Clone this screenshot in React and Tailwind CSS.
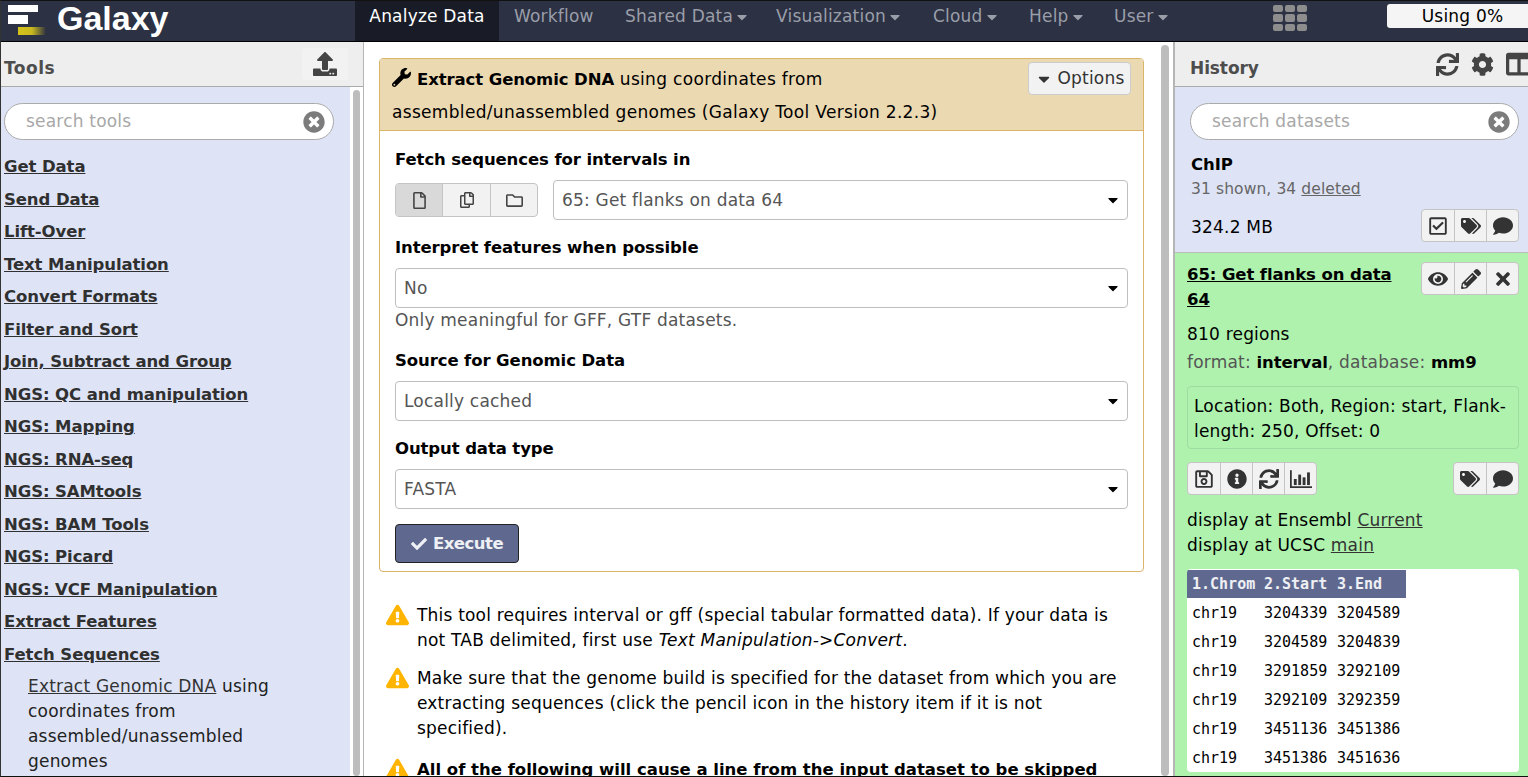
import React from "react";
import { FaUpload, FaTimesCircle, FaWrench, FaCaretDown, FaRegFile, FaRegCopy, FaRegFolder, FaCheck, FaExclamationTriangle, FaSync, FaCog, FaColumns, FaRegCheckSquare, FaTags, FaComment, FaEye, FaPencilAlt, FaTimes, FaRegSave, FaInfoCircle } from "react-icons/fa";

const font = "font-['DejaVu_Sans',sans-serif]";
const bold = "font-bold text-[16.5px] tracking-[-0.1px]";
const tools = ["Get Data","Send Data","Lift-Over","Text Manipulation","Convert Formats","Filter and Sort","Join, Subtract and Group","NGS: QC and manipulation","NGS: Mapping","NGS: RNA-seq","NGS: SAMtools","NGS: BAM Tools","NGS: Picard","NGS: VCF Manipulation","Extract Features","Fetch Sequences"];
const rows = [["3204339","3204589"],["3204589","3204839"],["3291859","3292109"],["3292109","3292359"],["3451136","3451386"],["3451386","3451636"]];

function BarChart({ className }) {
  return (
    <svg viewBox="0 0 20 18" width="22" height="20" className={className} fill="currentColor">
      <rect x="0" y="1" width="1.6" height="16" />
      <rect x="0" y="15.6" width="20" height="1.6" />
      <rect x="3.5" y="9" width="2.6" height="5.5" />
      <rect x="7.5" y="5" width="2.6" height="9.5" />
      <rect x="11.5" y="7.5" width="2.6" height="7" />
      <rect x="15.5" y="3" width="2.6" height="11.5" />
    </svg>
  );
}

function Nav({ label, caret, className }) {
  return (
    <div className={"flex items-center pb-[8px] text-[#9a9ea9] " + className}>
      {label}
      {caret && <FaCaretDown className="ml-[1px] text-[16px]" />}
    </div>
  );
}

function Search({ text }) {
  return (
    <div className="flex h-[37px] items-center justify-between rounded-full border border-[#aaa] bg-white pl-[21px] pr-[8px] text-[#a8a8a8]">
      <span className="pt-[1px]">{text}</span>
      <FaTimesCircle className="text-[22px] text-[#7c7c7c]" />
    </div>
  );
}

function Select({ value }) {
  return (
    <div className="flex h-[40px] items-center justify-between rounded-[4px] border border-[#bfbfbf] bg-white pl-[8px] pr-[6px] text-[#555]">
      <span className="pt-[1px]">{value}</span>
      <FaCaretDown className="text-[16px] text-black" />
    </div>
  );
}

function BtnGroup({ icons, className = "" }) {
  return (
    <div className={"flex h-[33px] overflow-hidden rounded-[4px] border border-[#c4c4c4] bg-[#f2f2f2] " + className}>
      {icons.map((I, i) => (
        <div key={i} className={"flex w-[32px] items-center justify-center text-[#333]" + (i ? " border-l border-[#c4c4c4]" : "")}>
          <I className="text-[20px]" />
        </div>
      ))}
    </div>
  );
}

function Warn({ children, className = "" }) {
  return (
    <div className={"flex " + className}>
      <FaExclamationTriangle className="mt-[1px] mr-[8px] h-[22px] w-[23px] shrink-0 text-[#ffb400]" />
      <div className="leading-[25px]">{children}</div>
    </div>
  );
}

export default function App() {
  return (
    <div className={"flex h-[777px] w-[1528px] flex-col overflow-hidden border-t border-b border-l border-t-[#111] border-b-[#111] border-l-[#333] bg-white text-[17px] text-black tracking-[0.2px] " + font}>
      <header className="flex h-[41px] shrink-0 items-stretch border-b border-black bg-[#2c3143]">
        <div className="flex w-[354px] items-start">
          <svg width="56" height="40" viewBox="0 0 56 40" className="shrink-0">
            <defs>
              <linearGradient id="gy" x1="0" x2="1" y1="0" y2="0">
                <stop offset="0" stopColor="#d4c31a" />
                <stop offset="0.5" stopColor="#c9b820" />
                <stop offset="1" stopColor="#2c3143" />
              </linearGradient>
            </defs>
            <rect x="7" y="4" width="30" height="7" fill="#fff" />
            <rect x="7" y="14" width="20" height="9" fill="#fff" />
            <rect x="17" y="26" width="28" height="8" fill="url(#gy)" />
          </svg>
          <span className="text-[34px] leading-[34px] font-bold tracking-normal text-white font-['Liberation_Sans',sans-serif]">Galaxy</span>
        </div>
        <div className="flex w-[144px] items-center justify-center bg-[#191c27] pb-[8px] text-white">Analyze Data</div>
        <Nav label="Workflow" className="ml-[15px] w-[111px]" />
        <Nav label="Shared Data" caret className="w-[151px]" />
        <Nav label="Visualization" caret className="w-[157px]" />
        <Nav label="Cloud" caret className="w-[96px]" />
        <Nav label="Help" caret className="w-[85px]" />
        <Nav label="User" caret className="w-[159px]" />
        <div className="mt-[4px] grid h-[26px] w-[34px] grid-cols-3 gap-[2px]">
          {Array.from({ length: 9 }).map((_, i) => <div key={i} className="rounded-[2px] bg-[#8d8d8d]" />)}
        </div>
        <div className="mt-[3px] ml-[80px] flex h-[24px] flex-1 items-center justify-center rounded-l-[3px] bg-[#f5f5f5] pl-[10px] pt-[1px] text-black">Using 0%</div>
      </header>

      <div className="flex min-h-0 flex-1">
        <aside className="flex w-[363px] shrink-0 flex-col border-r border-[#b5b5b5]">
          <div className="flex h-[45px] shrink-0 items-center justify-between border-b border-[#aaa] bg-[#eee] pl-[3px] pr-[15px]">
            <span className="pt-[10px] text-[17px] font-bold tracking-[0.5px] text-[#4d4d4d]">Tools</span>
            <div className="flex h-[32px] w-[46px] items-center justify-center rounded-[3px] bg-[#f2f2f2]">
              <FaUpload className="text-[24px] text-[#444]" />
            </div>
          </div>
          <div className="flex min-h-0 flex-1">
            <div className="w-[349px] shrink-0 bg-[#dee4f6] pt-[16px] pl-[3px]">
              <div className="mr-[16px]"><Search text="search tools" /></div>
              <ul className="mt-[11.5px]">
                {tools.map(t => (
                  <li key={t} className={"flex h-[32.5px] items-center text-[#303030] underline " + bold}>{t}</li>
                ))}
              </ul>
              <div className="mt-[2.5px] w-[290px] pl-[24px] leading-[25px] text-[#222]">
                <span className="text-[#333] underline">Extract Genomic DNA</span> using coordinates from assembled/unassembled genomes
              </div>
            </div>
            <div className="flex-1 px-[3px] pt-[3px]"><div className="h-full rounded-[4px] bg-[#bdbdbd]" /></div>
          </div>
        </aside>

        <main className="flex min-w-0 flex-1">
          <div className="w-[797px] shrink-0 pl-[15px] pt-[16px] pr-[1px]">
            <section className="w-[765px] rounded-[4px] border border-[#d9b46a]">
              <div className="flex h-[72px] justify-between border-b border-[#d9b46a] bg-[#ebd9b2] pl-[12px] pr-[12px]">
                <div className="pt-[4px] leading-[33px] tracking-[0.32px]">
                  <FaWrench className="mr-[6px] inline-block align-[-2px] text-[19px]" />
                  <b className={bold}>Extract Genomic DNA</b> using coordinates from<br />
                  assembled/unassembled genomes (Galaxy Tool Version 2.2.3)
                </div>
                <div className="mt-[3px] flex h-[33px] w-[103px] items-center justify-center rounded-[4px] border border-[#ccc] bg-[#f2f2f2] text-[#333]">
                  <FaCaretDown className="mr-[5px] text-[18px]" />Options
                </div>
              </div>
              <div className="pl-[15px] pr-[15px] pb-[8px]">
                <div className={"mt-[17px] flex h-[24px] items-center " + bold}>Fetch sequences for intervals in</div>
                <div className="mt-[8px] flex items-center gap-[15px]">
                  <div className="flex h-[34px] w-[143px] shrink-0 overflow-hidden rounded-[4px] border border-[#c4c4c4] bg-[#f2f2f2] text-[#444]">
                    <div className="flex w-[46px] items-center justify-center bg-[#d9d9d9]"><FaRegFile className="text-[17px]" /></div>
                    <div className="flex w-[48px] items-center justify-center border-l border-[#c4c4c4]"><FaRegCopy className="text-[16px]" /></div>
                    <div className="flex flex-1 items-center justify-center border-l border-[#c4c4c4]"><FaRegFolder className="text-[17px]" /></div>
                  </div>
                  <div className="flex-1"><Select value="65: Get flanks on data 64" /></div>
                </div>
                <div className={"mt-[16px] flex h-[24px] items-center " + bold}>Interpret features when possible</div>
                <div className="mt-[8px]"><Select value="No" /></div>
                <div className="flex h-[26px] items-center text-[#555]">Only meaningful for GFF, GTF datasets.</div>
                <div className={"mt-[15px] flex h-[24px] items-center " + bold}>Source for Genomic Data</div>
                <div className="mt-[8px]"><Select value="Locally cached" /></div>
                <div className={"mt-[16px] flex h-[24px] items-center " + bold}>Output data type</div>
                <div className="mt-[8px]"><Select value="FASTA" /></div>
                <div className={"mt-[15px] flex h-[39px] w-[124px] items-center justify-center rounded-[4px] border border-[#222] bg-[#5f6990] pt-[1px] text-white/90 " + bold}>
                  <FaCheck className="mr-[6px] text-[16px]" /><span className="tracking-[-0.5px]">Execute</span>
                </div>
              </div>
            </section>
            <div className="mt-[31px] ml-[7px]">
              <Warn>This tool requires interval or gff (special tabular formatted data). If your data is<br />not TAB delimited, first use <i>Text Manipulation-&gt;Convert</i>.</Warn>
              <Warn className="mt-[13px]">Make sure that the genome build is specified for the dataset from which you are<br />extracting sequences (click the pencil icon in the history item if it is not<br />specified).</Warn>
              <Warn className="mt-[16px]"><b className="text-[16.5px] font-bold tracking-normal">All of the following will cause a line from the input dataset to be skipped</b></Warn>
            </div>
          </div>
          <div className="w-[10px] shrink-0 pt-[3px] pr-[2px]"><div className="h-full rounded-[4px] bg-[#bdbdbd]" /></div>
        </main>

        <aside className="flex w-[355px] shrink-0 flex-col border-l-2 border-[#b5b5b5]">
          <div className="flex h-[45px] shrink-0 items-center justify-between overflow-hidden border-b border-[#aaa] bg-[#eee] pl-[15px]">
            <span className="pt-[10px] text-[17px] font-bold tracking-[-0.1px] text-[#4d4d4d]">History</span>
            <div className="flex items-center text-[#444]">
              <FaSync className="text-[23px]" />
              <FaCog className="ml-[12px] text-[23px]" />
              <FaColumns className="ml-[12px] mr-[-4px] text-[26px]" />
            </div>
          </div>
          <div className="h-[166px] shrink-0 border-b border-[#bbb] bg-[#dee4f6] pl-[15px] pr-[9px] pt-[16px]">
            <Search text="search datasets" />
            <div className={"mt-[13px] pl-[1px] leading-[24px] " + bold}>ChIP</div>
            <div className="pl-[1px] text-[15.5px] leading-[24px] tracking-[0.1px] text-[#666]">31 shown, 34 <span className="underline">deleted</span></div>
            <div className="mt-[8px] flex items-center justify-between pl-[1px]">
              <span className="pt-[5px]">324.2 MB</span>
              <BtnGroup icons={[FaRegCheckSquare, FaTags, FaComment]} />
            </div>
          </div>
          <div className="flex-1 bg-[#aef2ae] pl-[12px] pr-[9px]">
            <div className="flex items-start justify-between pt-[9px]">
              <div className={"w-[230px] leading-[25px] underline " + bold}>65: Get flanks on data 64</div>
              <BtnGroup icons={[FaEye, FaPencilAlt, FaTimes]} />
            </div>
            <div className="mt-[8px] leading-[28px]">810 regions</div>
            <div className="leading-[28px] text-[#555]">format: <b className={"text-black " + bold}>interval</b>, database: <b className={"text-black " + bold}>mm9</b></div>
            <div className="mt-[9px] rounded-[4px] border border-[#9fdc9f] px-[6px] pt-[7px] pb-[4px] leading-[25px]">Location: Both, Region: start, Flank-length: 250, Offset: 0</div>
            <div className="mt-[13px] flex justify-between">
              <BtnGroup icons={[FaRegSave, FaInfoCircle, FaSync, BarChart]} />
              <BtnGroup icons={[FaTags, FaComment]} />
            </div>
            <div className="mt-[13px] leading-[25px]">display at Ensembl <span className="text-[#333] underline">Current</span><br />display at UCSC <span className="text-[#333] underline">main</span></div>
            <div className="mt-[11px] h-[203px] overflow-hidden rounded-[4px] bg-white font-['DejaVu_Sans_Mono',monospace] text-[15px] tracking-normal">
              <div className="mt-[1px] mb-[1px] flex h-[28px] w-[219px] items-center bg-[#5f6990] pl-[5px] font-bold text-white/90">
                <span className="w-[72px]">1.Chrom</span><span className="w-[73px]">2.Start</span><span>3.End</span>
              </div>
              {rows.map(r => (
                <div key={r[0]} className="flex h-[29px] items-center pl-[5px]">
                  <span className="w-[72px]">chr19</span><span className="w-[73px]">{r[0]}</span><span>{r[1]}</span>
                </div>
              ))}
            </div>
          </div>
        </aside>
      </div>
    </div>
  );
}
